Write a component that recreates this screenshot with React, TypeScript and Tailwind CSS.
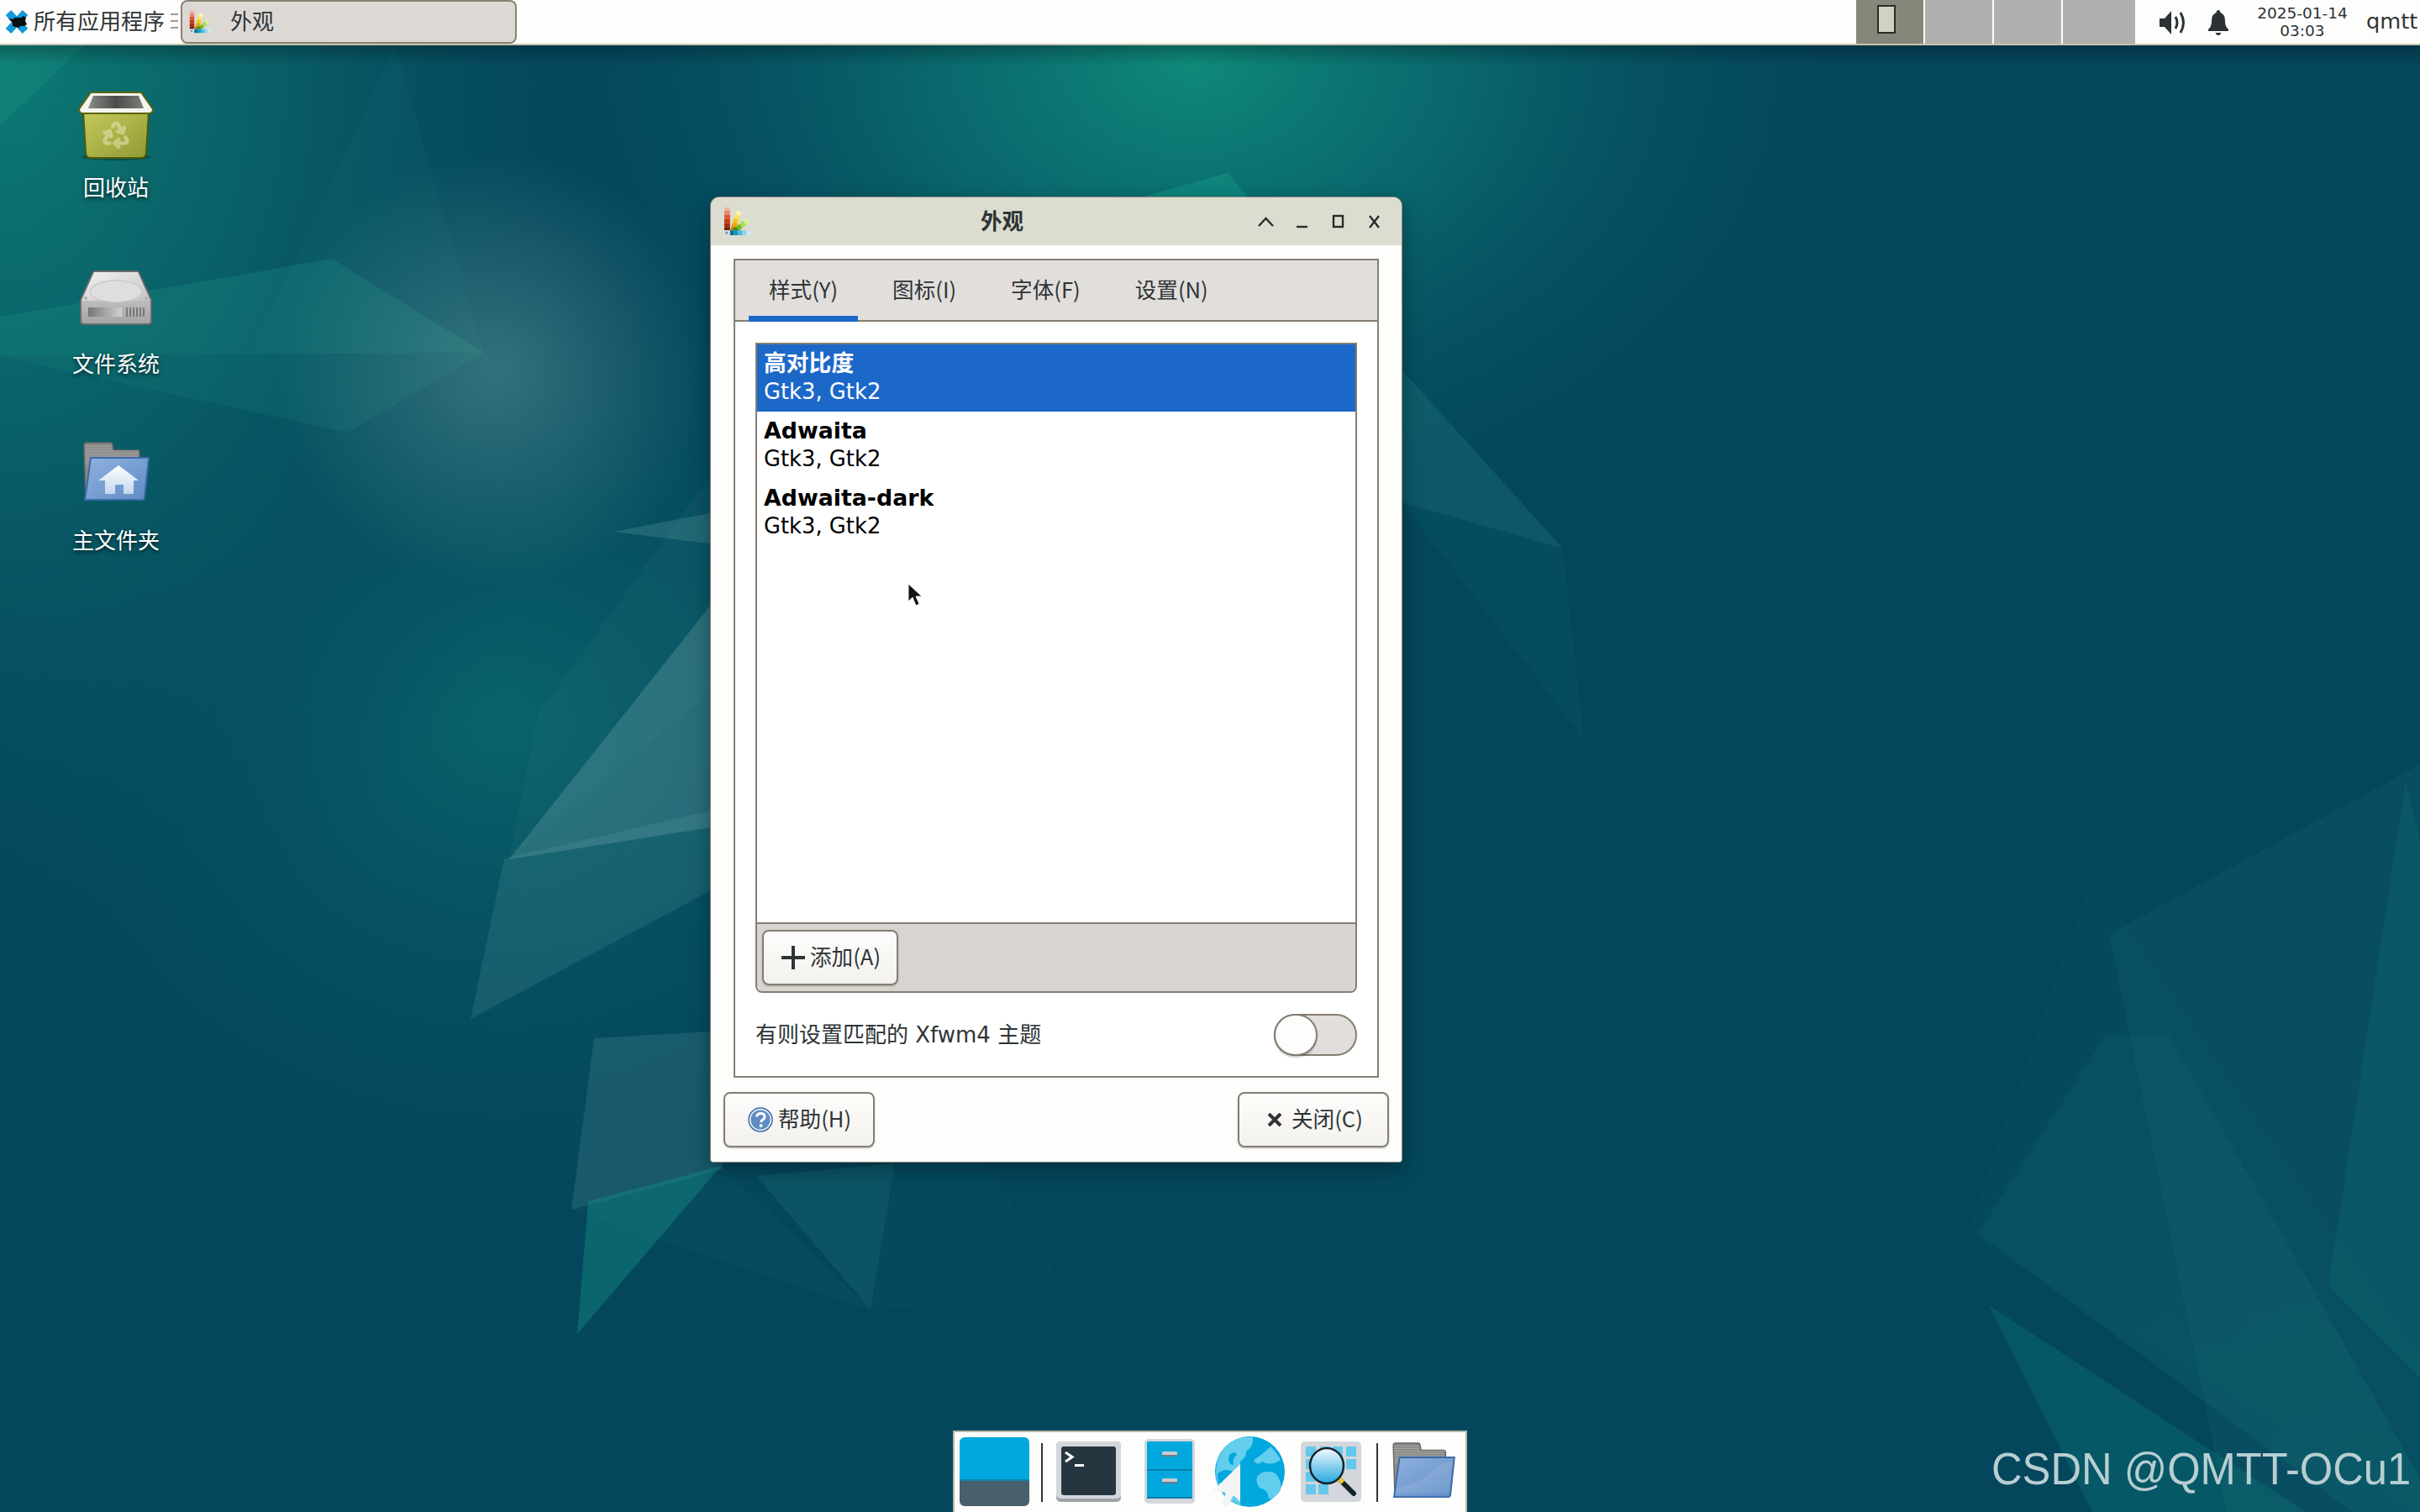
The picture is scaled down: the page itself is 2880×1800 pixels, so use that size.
import { Recycle } from "lucide-react";

function Wallpaper() {
  return (
    <svg className="absolute inset-0 w-[2880px] h-[1800px]" viewBox="0 0 2880 1800">
      <defs>
        <radialGradient id="wpA">
          <stop offset="0" stopColor="#0f8a7a" />
          <stop offset="0.4" stopColor="#0b7071" stopOpacity="0.75" />
          <stop offset="1" stopColor="#04475d" stopOpacity="0" />
        </radialGradient>
        <radialGradient id="wpB">
          <stop offset="0" stopColor="#0c7c74" />
          <stop offset="0.45" stopColor="#0a6269" stopOpacity="0.8" />
          <stop offset="1" stopColor="#04475d" stopOpacity="0" />
        </radialGradient>
        <radialGradient id="wpC">
          <stop offset="0" stopColor="#0a686e" stopOpacity="0.85" />
          <stop offset="1" stopColor="#04475d" stopOpacity="0" />
        </radialGradient>
        <radialGradient id="wpGlow" gradientUnits="userSpaceOnUse" cx="590" cy="440" r="260">
          <stop offset="0" stopColor="#7fb0aa" stopOpacity="0.38" />
          <stop offset="1" stopColor="#7fb0aa" stopOpacity="0" />
        </radialGradient>
        <linearGradient id="wpFade" gradientUnits="userSpaceOnUse" x1="2400" y1="1000" x2="2800" y2="1800">
          <stop offset="0" stopColor="#2b8a88" stopOpacity="0.05" />
          <stop offset="1" stopColor="#0d8078" stopOpacity="0.22" />
        </linearGradient>
      </defs>
      <rect width="2880" height="1800" fill="#04475d" />
      <ellipse cx="600" cy="860" rx="720" ry="640" fill="url(#wpC)" />
      <ellipse cx="0" cy="60" rx="760" ry="1120" fill="url(#wpB)" />
      <ellipse cx="1420" cy="70" rx="820" ry="600" fill="url(#wpA)" />

      {/* top left shards */}
      <polygon points="0,54 100,54 0,150" fill="#1f9488" opacity="0.3" />
      <polygon points="470,54 576,420 300,420" fill="#2a9088" opacity="0.07" />
      <polygon points="0,377 395,308 576,420 0,424" fill="#22a08c" opacity="0.22" />
      <polygon points="0,424 576,420 413,515" fill="#1d9084" opacity="0.16" />
      <rect width="2880" height="1800" fill="url(#wpGlow)" />

      {/* behind the dialog, left */}
      <polygon points="730,633 850,610 850,648" fill="#6aa8a4" opacity="0.26" />
      <polygon points="606,1023 846,720 846,985" fill="#8ab8b8" opacity="0.26" />
      <polygon points="640,850 850,560 850,820 606,1023" fill="#5aa0a0" opacity="0.07" />
      <polygon points="560,1213 600,1022 846,965 846,1060" fill="#6aa4ae" opacity="0.18" />
      <polygon points="707,1236 846,1228 860,1392 680,1440" fill="#7ab0b4" opacity="0.17" />
      <polygon points="687,1588 700,1430 858,1388" fill="#129084" opacity="0.42" />
      <polygon points="900,1400 1065,1385 1036,1559" fill="#3d9a9a" opacity="0.14" />
      <polygon points="680,1440 858,1388 1036,1559" fill="#3d9a9a" opacity="0.05" />
      <polygon points="1175,1385 1276,1548 1036,1559 1065,1385" fill="#3d9a9a" opacity="0.03" />

      {/* right of the dialog */}
      <polygon points="1340,240 1461,206 1490,240" fill="#14a08c" opacity="0.4" />
      <polygon points="1668,440 1860,653 1668,598" fill="#3aa09a" opacity="0.18" />
      <polygon points="1668,598 1860,653 1885,880" fill="#2a8a8a" opacity="0.07" />

      {/* bottom right */}
      <polygon points="2880,910 2510,1112 2650,1800 2880,1800" fill="#3e8c96" opacity="0.1" />
      <polygon points="2863,931 2771,1531 2880,1640 2880,1000" fill="#11897f" opacity="0.18" />
      <polygon points="2354,1468 2505,1233 2580,1230 2880,1760 2880,1800 2800,1800" fill="url(#wpFade)" />
      <polygon points="2367,1554 2744,1800 2490,1800" fill="#10857e" opacity="0.28" />
      <polygon points="2490,1040 2880,1620 2880,1800 2340,1468" fill="#0f7a78" opacity="0.05" />
    </svg>
  );
}

function Whisker() {
  return (
    <svg className="w-[30px] h-[30px] shrink-0" viewBox="0 0 30 30">
      <path d="M5 4 L25 26 M25 4 L5 26" stroke="#1299da" strokeWidth="9" />
      <path d="M5 11 L10 12 L13 10 L20 10 L23 8 L26 10 L25 14 L27 18 L24 20 L19 20 L18 22 L13 21 L10 20 L10 16 Z" fill="#0b0f12" />
    </svg>
  );
}

function Palette({ className }: { className: string }) {
  return (
    <svg className={className} viewBox="0 0 36 36">
      <rect x="1" y="1" width="7" height="4" fill="#eeb4a6" />
      <rect x="1" y="5" width="7" height="5" fill="#e28a6e" />
      <rect x="1" y="10" width="7" height="5" fill="#d8552e" />
      <rect x="1" y="15" width="7" height="5" fill="#c93a10" />
      <rect x="1" y="20" width="7" height="5" fill="#a72a08" />
      <rect x="1" y="25" width="7" height="4" fill="#7a1a04" />
      <g transform="rotate(18 10 30)">
        <rect x="8" y="4" width="6" height="5" fill="#fdf2a8" />
        <rect x="8" y="9" width="6" height="5" fill="#fbe35a" />
        <rect x="8" y="14" width="6" height="5" fill="#f6c812" />
        <rect x="8" y="19" width="6" height="5" fill="#eba60a" />
        <rect x="8" y="24" width="6" height="5" fill="#c88406" />
      </g>
      <g transform="rotate(50 12 30)">
        <rect x="10" y="7" width="6" height="6" fill="#d6f09a" />
        <rect x="10" y="13" width="6" height="6" fill="#a6dc4e" />
        <rect x="10" y="19" width="6" height="5" fill="#72b81e" />
        <rect x="10" y="24" width="6" height="5" fill="#3e8a10" />
      </g>
      <rect x="2" y="29" width="32" height="6" fill="#cfe6ee" />
      <rect x="8" y="29" width="5" height="6" fill="#0d6f96" />
      <rect x="13" y="29" width="5" height="6" fill="#1b93bc" />
      <rect x="18" y="29" width="5" height="6" fill="#4db7d8" />
      <rect x="23" y="29" width="5" height="6" fill="#8ed3e8" />
      <circle cx="4" cy="32" r="1.6" fill="#7a8a90" />
    </svg>
  );
}

function TrashIcon() {
  return (
    <svg className="w-[92px] h-[84px]" viewBox="0 0 92 84">
      <defs>
        <linearGradient id="trashBody" x1="0" y1="0" x2="1" y2="1">
          <stop offset="0" stopColor="#c6ca5c" />
          <stop offset="1" stopColor="#8f9a33" />
        </linearGradient>
        <linearGradient id="trashIn" x1="0" y1="0" x2="1" y2="0">
          <stop offset="0" stopColor="#8a8c88" />
          <stop offset="0.5" stopColor="#4a4c4a" />
          <stop offset="1" stopColor="#7c7e7a" />
        </linearGradient>
      </defs>
      <ellipse cx="46" cy="79" rx="42" ry="4" fill="#000" opacity="0.25" />
      <path d="M7 24 H85 L82 74 Q82 80 76 80 H16 Q10 80 10 74 Z" fill="url(#trashBody)" stroke="#4f5a08" strokeWidth="2" />
      <path d="M16 2 H76 L90 22 Q90 27 85 27 H7 Q2 27 2 22 Z" fill="#f4f4f0" stroke="#5a640e" strokeWidth="2" />
      <path d="M19 6 H73 L79 21 H13 Z" fill="url(#trashIn)" />
    </svg>
  );
}

function DiskIcon() {
  return (
    <svg className="w-[88px] h-[66px]" viewBox="0 0 88 66">
      <defs>
        <linearGradient id="diskTop" x1="0" y1="0" x2="1" y2="1">
          <stop offset="0" stopColor="#f2f2f2" />
          <stop offset="1" stopColor="#c4c4c4" />
        </linearGradient>
        <linearGradient id="diskFront" x1="0" y1="0" x2="0" y2="1">
          <stop offset="0" stopColor="#dcdcdc" />
          <stop offset="1" stopColor="#a4a4a4" />
        </linearGradient>
        <linearGradient id="diskSlot" x1="0" y1="0" x2="1" y2="0">
          <stop offset="0" stopColor="#777" />
          <stop offset="1" stopColor="#d0d0d0" />
        </linearGradient>
      </defs>
      <path d="M17 2 Q18 1 20 1 H68 Q70 1 71 2 L86 35 V60 Q86 64 82 64 H6 Q2 64 2 60 V35 Z" fill="url(#diskFront)" stroke="#6a6a6a" strokeWidth="2" />
      <path d="M18 2 H70 L85 36 H3 Z" fill="url(#diskTop)" />
      <ellipse cx="44" cy="25" rx="31" ry="13" fill="#dedede" stroke="#c0c0c0" />
      <circle cx="8" cy="33" r="2" fill="#b0b0b0" />
      <circle cx="80" cy="33" r="2" fill="#b0b0b0" />
      <rect x="11" y="44" width="40" height="11" fill="url(#diskSlot)" />
      {[56, 60, 64, 68, 72, 76].map((x) => (
        <rect key={x} x={x} y="44" width="2" height="11" fill="#777" />
      ))}
    </svg>
  );
}

function FolderIcon({ home, className }: { home?: boolean; className: string }) {
  const id = home ? "h" : "d";
  return (
    <svg className={className} viewBox="0 0 82 72">
      <defs>
        <linearGradient id={`fold${id}`} x1="0" y1="0" x2="1" y2="1">
          <stop offset="0" stopColor="#8fb2de" />
          <stop offset="1" stopColor="#5f8cc6" />
        </linearGradient>
        <linearGradient id={`house${id}`} x1="0" y1="0" x2="0" y2="1">
          <stop offset="0" stopColor="#ffffff" />
          <stop offset="1" stopColor="#c4d6ee" />
        </linearGradient>
      </defs>
      <path d="M3 4 Q3 1 6 1 H34 Q37 1 37 5 L38 10 H66 Q69 10 69 13 V30 H10 L6 68 H5 Z" fill="#8a8a88" stroke="#666" strokeWidth="1.5" />
      {[5, 8, 11, 14, 17, 20, 23, 26].map((y) => (
        <line key={y} x1="4" x2={y < 10 ? "36" : "68"} y1={y} y2={y} stroke="#a6a6a4" strokeWidth="1" />
      ))}
      <path d="M11 19 H80 L75 66 Q75 69 72 69 H4 Z" fill={`url(#fold${id})`} stroke="#3d6aa8" strokeWidth="2" />
      {home && <path d="M44 28 L68 46 H62 V62 H50 V51 H40 V62 H28 V46 H20 Z" fill={`url(#house${id})`} />}
      {!home && <path d="M8 58 Q40 50 50 38 Q62 26 77 24 L74 64 H6 Z" fill="#ffffff" opacity="0.1" />}
    </svg>
  );
}

function DeskItem({ label, icon, lift }: { label: string; icon: React.ReactNode; lift?: boolean }) {
  return (
    <div className="flex h-[210px] flex-col items-center">
      <div className={`flex h-[92px] items-end ${lift ? "pb-[14px]" : ""}`}>{icon}</div>
      <div className="mt-[14px] text-[26px] leading-[36px] text-white [text-shadow:0_2px_5px_rgba(0,0,0,0.75)]">{label}</div>
    </div>
  );
}

function TopPanel() {
  return (
    <div className="relative flex h-[54px] items-start border-b-2 border-[#c4c4b2] bg-[#fdfdfb] text-[#2e3436]">
      <div className="ml-[5px] mt-[11px]"><Whisker /></div>
      <div className="ml-[5px] h-[52px] text-[26px] leading-[52px]">所有应用程序</div>
      <div className="ml-[7px] mt-[16px] flex w-[9px] flex-col gap-[6px]">
        <div className="h-[2px] bg-[#9a9a98]" />
        <div className="h-[2px] bg-[#9a9a98]" />
        <div className="h-[2px] bg-[#9a9a98]" />
      </div>
      <div className="ml-[3px] flex h-[52px] w-[400px] items-center rounded-[8px] border-2 border-[#8a8172] bg-[#dcd9d5]">
        <Palette className="ml-[8px] h-[28px] w-[28px]" />
        <span className="ml-[21px] text-[26px]">外观</span>
      </div>
      <div className="flex-1" />
      <div className="flex h-[52px] gap-[2px]">
        <div className="flex w-[80px] justify-center bg-[#86867a] pt-[6px]">
          <div className="-ml-[8px] h-[34px] w-[22px] border-2 border-[#2a2c2a] bg-[#d0d2c2]" />
        </div>
        <div className="w-[80px] bg-[#b0b0ae]" />
        <div className="w-[80px] bg-[#b0b0ae]" />
        <div className="w-[86px] bg-[#b0b0ae]" />
      </div>
      <svg className="ml-[29px] mt-[12px] h-[30px] w-[32px]" viewBox="0 0 32 30" fill="#2a3236">
        <path d="M0 10 H6 L14 1 V29 L6 20 H0 Z" />
        <path d="M19 8 Q23 15 19 22" fill="none" stroke="#2a3236" strokeWidth="3" />
        <path d="M25 3 Q32 15 25 27" fill="none" stroke="#2a3236" strokeWidth="3" />
      </svg>
      <svg className="ml-[26px] mt-[12px] h-[30px] w-[24px]" viewBox="0 0 24 30" fill="#2a3236">
        <path d="M12 0 Q14 0 14.5 3 Q20 5 20 13 Q20 20 24 23 V25 H0 V23 Q4 20 4 13 Q4 5 9.5 3 Q10 0 12 0 Z" />
        <path d="M8.5 27 H15.5 Q14.5 30 12 30 Q9.5 30 8.5 27 Z" />
      </svg>
      <div className="ml-[28px] mt-[5px] w-[120px] text-center text-[18.5px] leading-[21px]">
        <div>2025-01-14</div>
        <div>03:03</div>
      </div>
      <div className="ml-[16px] w-[64px] text-[25.6px] leading-[50px]">qmtt</div>
    </div>
  );
}

function WinButtons() {
  return (
    <div className="mr-[11px] flex">
      <svg className="h-[20px] w-[43px]" viewBox="0 0 43 20" fill="none" stroke="#2a2c2a" strokeWidth="2.4">
        <path d="M13 15 L21.5 6 L30 15" />
      </svg>
      <svg className="h-[20px] w-[43px]" viewBox="0 0 43 20" fill="none" stroke="#2a2c2a" strokeWidth="2.4">
        <path d="M15 16 H28" />
      </svg>
      <svg className="h-[20px] w-[43px]" viewBox="0 0 43 20" fill="none" stroke="#2a2c2a" strokeWidth="2.4">
        <rect x="16" y="3" width="11" height="13" />
      </svg>
      <svg className="h-[20px] w-[43px]" viewBox="0 0 43 20" fill="none" stroke="#2a2c2a" strokeWidth="2.4">
        <path d="M16 3 L27 17 M27 3 L16 17" />
      </svg>
    </div>
  );
}

function ListRow({ name, selected }: { name: string; selected?: boolean }) {
  return (
    <div className={`h-[80px] pl-[8px] pt-[5px] text-[25.8px] leading-[35px] ${selected ? "bg-[#1c68c9] text-white" : "text-black"}`}>
      <div className="text-[26.8px] font-bold">{name}</div>
      <div className="-mt-[1px]">Gtk3, Gtk2</div>
    </div>
  );
}

function Appearance() {
  const btn = "flex h-[66px] items-center rounded-[8px] border-2 border-[#857e72] bg-gradient-to-b from-[#fdfdfb] to-[#f3f1ee] font-['Noto_Sans_CJK_SC',sans-serif] text-[25.6px] text-[#2e3436] shadow-[0_1px_2px_rgba(0,0,0,0.25)]";
  const tab = "h-[73px] px-[24px] leading-[67px]";
  return (
    <div className="absolute left-[846px] top-[235px] flex h-[1148px] w-[822px] flex-col overflow-hidden rounded-t-[10px] rounded-b-[3px] bg-[#fdfdfb] shadow-[0_0_0_1px_#8c8a7e,0_8px_24px_rgba(0,0,0,0.35)]">
      <div className="flex h-[57px] shrink-0 items-center bg-[#dddcd1] text-[#2e3436]">
        <Palette className="ml-[15px] h-[35px] w-[35px]" />
        <div className="flex-1 pl-[4px] pt-[2px] text-center text-[25.6px] font-bold">外观</div>
        <WinButtons />
      </div>
      <div className="mx-[27px] mt-[16px] flex h-[975px] flex-col border-2 border-[#857e72] bg-white">
        <div className="flex h-[73px] shrink-0 gap-[17px] border-b-2 border-[#857e72] bg-[#e1dedb] px-[16px] font-['Noto_Sans_CJK_SC',sans-serif] text-[25.6px] text-[#2e3436]">
          <div className={`${tab} border-b-[7px] border-[#1c68c9]`}>样式(Y)</div>
          <div className={tab}>图标(I)</div>
          <div className={tab}>字体(F)</div>
          <div className={tab}>设置(N)</div>
        </div>
        <div className="flex flex-1 flex-col px-[24px] pt-[25px]">
          <div className="flex h-[774px] flex-col overflow-hidden rounded-b-[8px] border-2 border-[#857e72]">
            <div className="h-[688px] shrink-0 bg-white">
              <ListRow name="高对比度" selected />
              <ListRow name="Adwaita" />
              <ListRow name="Adwaita-dark" />
            </div>
            <div className="flex-1 border-t-2 border-[#857e72] bg-[#d8d5d0] pl-[6px] pt-[7px]">
              <div className={`${btn} w-[162px] pl-[20px]`}>
                <svg className="h-[30px] w-[30px]" viewBox="0 0 30 30" fill="#2e3436">
                  <rect x="13" y="1" width="4" height="28" />
                  <rect x="1" y="13" width="28" height="4" />
                </svg>
                <span className="mb-[3px] ml-[5px]">添加(A)</span>
              </div>
            </div>
          </div>
          <div className="mt-[25px] flex h-[50px] items-center justify-between text-[26px] text-[#2e3436]">
            <span>有则设置匹配的 Xfwm4 主题</span>
            <div className="h-[50px] w-[99px] rounded-full border-2 border-[#857e72] bg-[#e1dedb]">
              <div className="-ml-[2px] -mt-[2px] h-[50px] w-[52px] rounded-full border-2 border-[#857e72] bg-[#fdfdfb] shadow-[0_2px_2px_rgba(0,0,0,0.2)]" />
            </div>
          </div>
        </div>
      </div>
      <div className="mt-[17px] flex justify-between px-[15px]">
        <div className={`${btn} w-[180px] pl-[27px]`}>
          <svg className="h-[30px] w-[30px] shrink-0" viewBox="0 0 30 30">
            <circle cx="15" cy="15" r="14" fill="#e8eef6" stroke="#3f6ea8" strokeWidth="1.5" />
            <circle cx="15" cy="15" r="11.5" fill="#5f8cc2" />
            <path d="M10.5 11.5 Q11 7.5 15.5 7.5 Q20 7.5 20 11.5 Q20 14 17 15.5 Q15.8 16.3 15.8 18" fill="none" stroke="#fff" strokeWidth="3" />
            <circle cx="15.6" cy="22" r="2" fill="#fff" />
          </svg>
          <span className="mb-[3px] ml-[6px]">帮助(H)</span>
        </div>
        <div className={`${btn} w-[180px] pl-[33px]`}>
          <svg className="h-[16px] w-[18px] shrink-0" viewBox="0 0 18 16" fill="none" stroke="#2e3436" strokeWidth="4">
            <path d="M2 1 L16 15 M16 1 L2 15" />
          </svg>
          <span className="mb-[3px] ml-[11px]">关闭(C)</span>
        </div>
      </div>
    </div>
  );
}

function Dock() {
  return (
    <div className="absolute bottom-0 left-[1134px] flex h-[97px] w-[612px] items-start border-x-2 border-t-2 border-[#b4b8a6] bg-[#fdfdfb]">
      <div className="ml-[6px] mt-[6px] h-[82px] w-[83px] overflow-hidden rounded-[6px]">
        <div className="h-[52px] border-b-2 border-[#0a86ad] bg-[#00a8de]" />
        <div className="h-[30px] bg-[#4a5f6c]" />
      </div>
      <div className="ml-[14px] mt-[13px] h-[70px] w-[2px] bg-[#2e3436]" />
      <svg className="ml-[16px] mt-[11px] h-[72px] w-[77px]" viewBox="0 0 77 72">
        <rect width="77" height="72" rx="5" fill="#9ea3a8" />
        <rect width="77" height="68" rx="5" fill="#d3d7db" />
        <rect x="6" y="6" width="65" height="58" rx="3" fill="#263640" />
        <path d="M11 13 L19 18.5 L11 24" fill="none" stroke="#fff" strokeWidth="3" />
        <rect x="22" y="27" width="11" height="3" fill="#fff" />
      </svg>
      <svg className="ml-[28px] mt-[8px] h-[77px] w-[60px]" viewBox="0 0 60 77">
        <rect width="60" height="77" rx="5" fill="#d3d7db" />
        <rect x="3" y="3" width="54" height="68" rx="2" fill="#00a8de" />
        <rect x="3" y="36" width="54" height="2" fill="#0b7fa6" />
        <rect x="3" y="69" width="54" height="2" fill="#0b7fa6" />
        <path d="M21 20 V16 Q21 15 23 15 H37 Q39 15 39 16 V20 Z" fill="#c8ccd0" />
        <rect x="21" y="19" width="18" height="2" fill="#6f7b82" />
        <path d="M21 52 V48 Q21 47 23 47 H37 Q39 47 39 48 V52 Z" fill="#c8ccd0" />
        <rect x="21" y="51" width="18" height="2" fill="#6f7b82" />
      </svg>
      <svg className="ml-[24px] mt-[5px] h-[84px] w-[83px] overflow-visible" viewBox="0 0 83 84">
        <ellipse cx="41.5" cy="42" rx="41.5" ry="42" fill="#00a8de" />
        <path d="M30 2 Q10 8 3 28 Q-2 48 6 62 Q14 76 30 82 V30 Q38 24 37 18 Q46 12 45 1 Q38 0 30 2 Z" fill="#63cdee" />
        <path d="M17 22 Q24 16 26 22 Q20 26 22 34 Q14 34 17 22 Z M3 44 Q14 36 24 44 Q26 52 18 56 Q8 54 4 56 Z" fill="#00a8de" />
        <path d="M46 28 Q56 22 66 12 Q74 20 78 28 Q66 36 56 30 Q50 36 46 28 Z" fill="#63cdee" />
        <path d="M50 48 Q58 38 72 44 Q80 54 78 64 Q72 74 64 74 Q62 62 54 62 Q48 56 50 48 Z" fill="#63cdee" />
        <path d="M30 33 V78 L22 70 L15 84 L8 81 L13 67 L-2 64 Z" fill="#f2f4f5" />
      </svg>
      <svg className="ml-[19px] mt-[11px] h-[72px] w-[72px]" viewBox="0 0 72 72">
        <defs>
          <linearGradient id="lens" x1="0" y1="0" x2="0" y2="1">
            <stop offset="0" stopColor="#f4fbfe" />
            <stop offset="1" stopColor="#25a6e0" />
          </linearGradient>
        </defs>
        <rect width="72" height="72" rx="5" fill="#d3d7db" />
        {[[6, 6], [23, 6], [38, 6], [54, 6], [6, 21], [54, 21], [6, 36], [6, 51], [21, 51]].map(([x, y]) => (
          <rect key={`${x}-${y}`} x={x} y={y} width="12" height="12" fill="#63c8ec" />
        ))}
        <path d="M46 45 L63 62" stroke="#14222a" strokeWidth="6" strokeLinecap="round" />
        <path d="M45 44 L50 49" stroke="#e8c838" strokeWidth="6" />
        <ellipse cx="31" cy="29" rx="20" ry="21" fill="url(#lens)" stroke="#14222a" strokeWidth="2.5" />
      </svg>
      <div className="ml-[18px] mt-[13px] h-[70px] w-[2px] bg-[#2e3436]" />
      <FolderIcon className="ml-[15px] mt-[12px] h-[68px] w-[78px]" />
    </div>
  );
}

export default function App() {
  return (
    <div className="relative h-[1800px] w-[2880px] overflow-hidden bg-[#04475d] font-['DejaVu_Sans','Noto_Sans_CJK_SC',sans-serif]">
      <Wallpaper />
      <TopPanel />
      <div className="pointer-events-none absolute left-0 right-0 top-[54px] h-[24px] bg-gradient-to-b from-[rgba(0,0,0,0.25)] to-transparent" />
      <div className="absolute left-[36px] top-[100px] flex w-[204px] flex-col">
        <DeskItem
          label="回收站"
          icon={
            <div className="relative">
              <TrashIcon />
              <Recycle className="absolute left-[28px] top-[34px] h-[36px] w-[36px] text-[#dfe2b0] opacity-60" strokeWidth={3} />
            </div>
          }
        />
        <DeskItem label="文件系统" lift icon={<DiskIcon />} />
        <DeskItem label="主文件夹" lift icon={<FolderIcon home className="h-[72px] w-[82px]" />} />
      </div>
      <Appearance />
      <svg className="absolute left-[1079px] top-[694px] h-[30px] w-[20px]" viewBox="0 0 20 30">
        <path d="M2 1 V22 L7 17 L11 27 L15 25 L11 16 L18 16 Z" fill="#111" stroke="#eee" strokeWidth="1" />
      </svg>
      <Dock />
      <div className="absolute left-[2370px] top-[1723px] origin-bottom scale-y-[1.06] font-['Liberation_Sans',sans-serif] text-[50.7px] leading-[56px] text-[#b8ced2]">CSDN @QMTT-OCu1</div>
    </div>
  );
}
